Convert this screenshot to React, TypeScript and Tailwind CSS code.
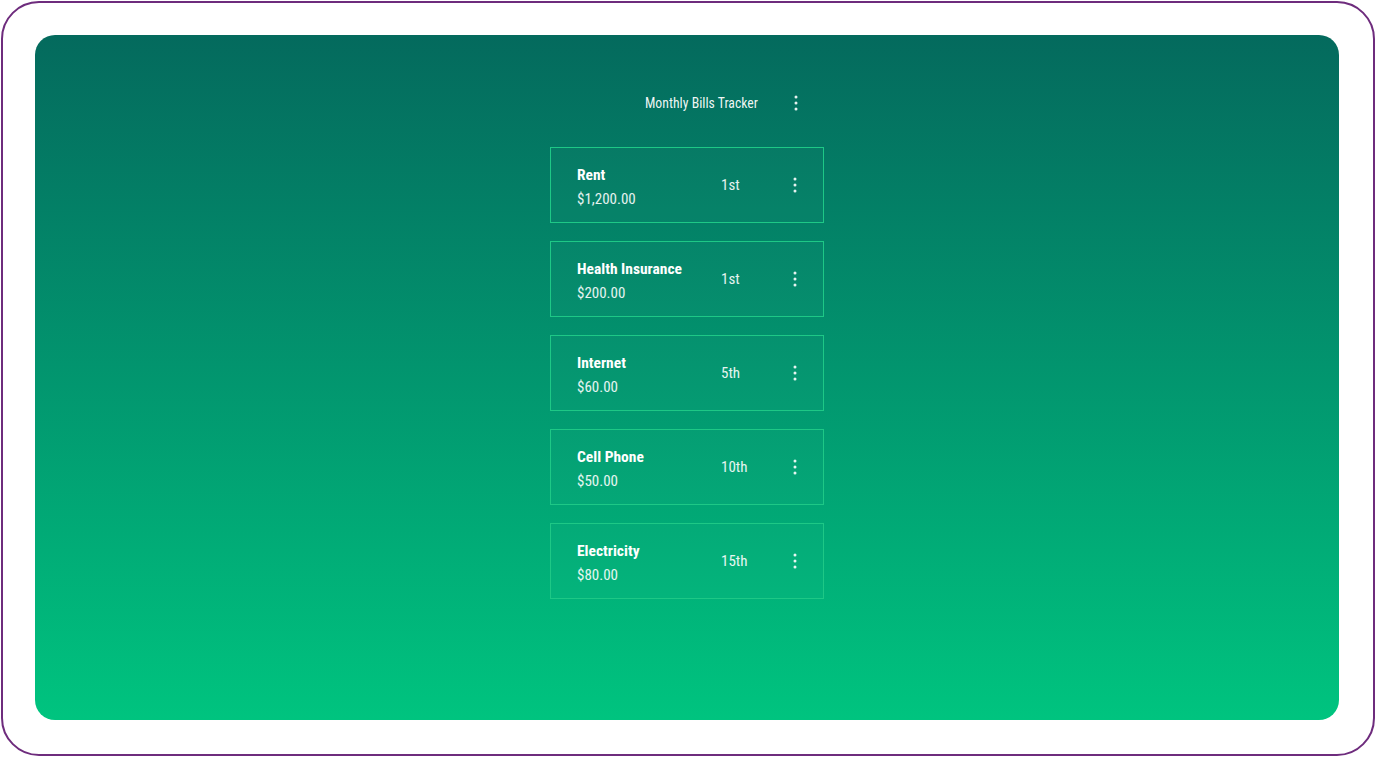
import React from 'react';

type Bill = { name: string; amount: string; due: string };

const bills: Bill[] = [
  { name: 'Rent', amount: '$1,200.00', due: '1st' },
  { name: 'Health Insurance', amount: '$200.00', due: '1st' },
  { name: 'Internet', amount: '$60.00', due: '5th' },
  { name: 'Cell Phone', amount: '$50.00', due: '10th' },
  { name: 'Electricity', amount: '$80.00', due: '15th' },
];

function MoreVert() {
  return (
    <svg width="6" height="18" viewBox="0 0 6 18" className="fill-white/90">
      <circle cx="3" cy="3" r="1.5" />
      <circle cx="3" cy="9" r="1.5" />
      <circle cx="3" cy="15" r="1.5" />
    </svg>
  );
}

export default function App() {
  return (
    <div className="h-[757px] w-full bg-white p-[1px] font-['Roboto',sans-serif] font-stretch-condensed">
      <div className="h-full rounded-[38px] border-2 border-[#6e2c7d] pt-[32px] pr-[34px] pb-[34px] pl-[32px]">
        <div className="flex h-full flex-col items-center rounded-[20px] bg-linear-to-b from-[#046a5d] to-[#00c47f] pt-[44px]">
          <div className="w-[274px]">
            {/* Header */}
            <div className="flex h-[48px] items-center justify-end">
              <span className="text-[13.75px] text-white/95">Monthly Bills Tracker</span>
              <div className="ml-[35px] mr-[25px] flex items-center">
                <MoreVert />
              </div>
            </div>

            {/* Bills */}
            <div className="mt-[20px] flex flex-col gap-[18px]">
              {bills.map((b) => (
                <div
                  key={b.name}
                  className="flex h-[76px] items-center border border-[#1ec886] bg-white/[0.015] pl-[26px]"
                >
                  <div className="flex w-[144px] flex-col pt-[3px]">
                    <span className="text-[15.5px] font-bold leading-[20px] text-white">{b.name}</span>
                    <span className="mt-[4px] text-[15px] leading-[20px] text-white/90">{b.amount}</span>
                  </div>
                  <span className="flex-1 pt-[1px] text-[15px] text-white/90">{b.due}</span>
                  <div className="mr-[25px] flex items-center">
                    <MoreVert />
                  </div>
                </div>
              ))}
            </div>
          </div>
        </div>
      </div>
    </div>
  );
}
